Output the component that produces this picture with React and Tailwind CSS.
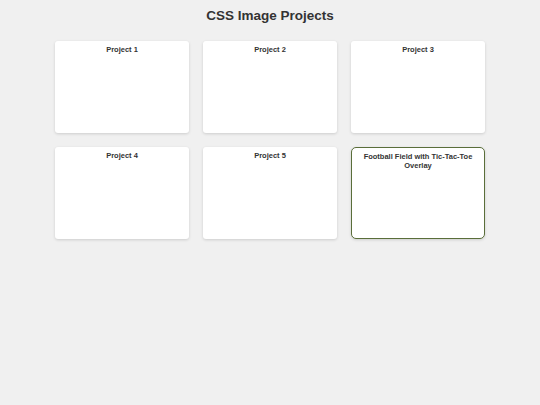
import React from 'react';

const projects = [
  { id: 1, title: 'Project 1' },
  { id: 2, title: 'Project 2' },
  { id: 3, title: 'Project 3' },
  { id: 4, title: 'Project 4' },
  { id: 5, title: 'Project 5' },
  { id: 6, title: 'Football Field with Tic-Tac-Toe Overlay', featured: true },
];

export default function App() {
  return (
    <div className="min-h-[405px] bg-[#f0f0f0] font-['Liberation_Sans',Arial,sans-serif] text-[#333]">
      <h1 className="pt-[8px] text-center text-[13.5px] font-bold leading-[16px]">CSS Image Projects</h1>
      <div className="mx-auto mt-[17px] grid w-[430px] grid-cols-3 gap-[14px]">
        {projects.map(p => (
          <div key={p.id}
            className={`h-[92px] bg-white px-[8px] pt-[4px] shadow-[0_1px_3px_rgba(0,0,0,0.15)] ${p.featured ? 'rounded-[5px] border border-[#5a6e3a]' : 'rounded-[3px]'}`}>
            <h3 className="text-center text-[7.5px] font-bold leading-[9px] text-[#333]">{p.title}</h3>
          </div>
        ))}
      </div>
    </div>
  );
}
